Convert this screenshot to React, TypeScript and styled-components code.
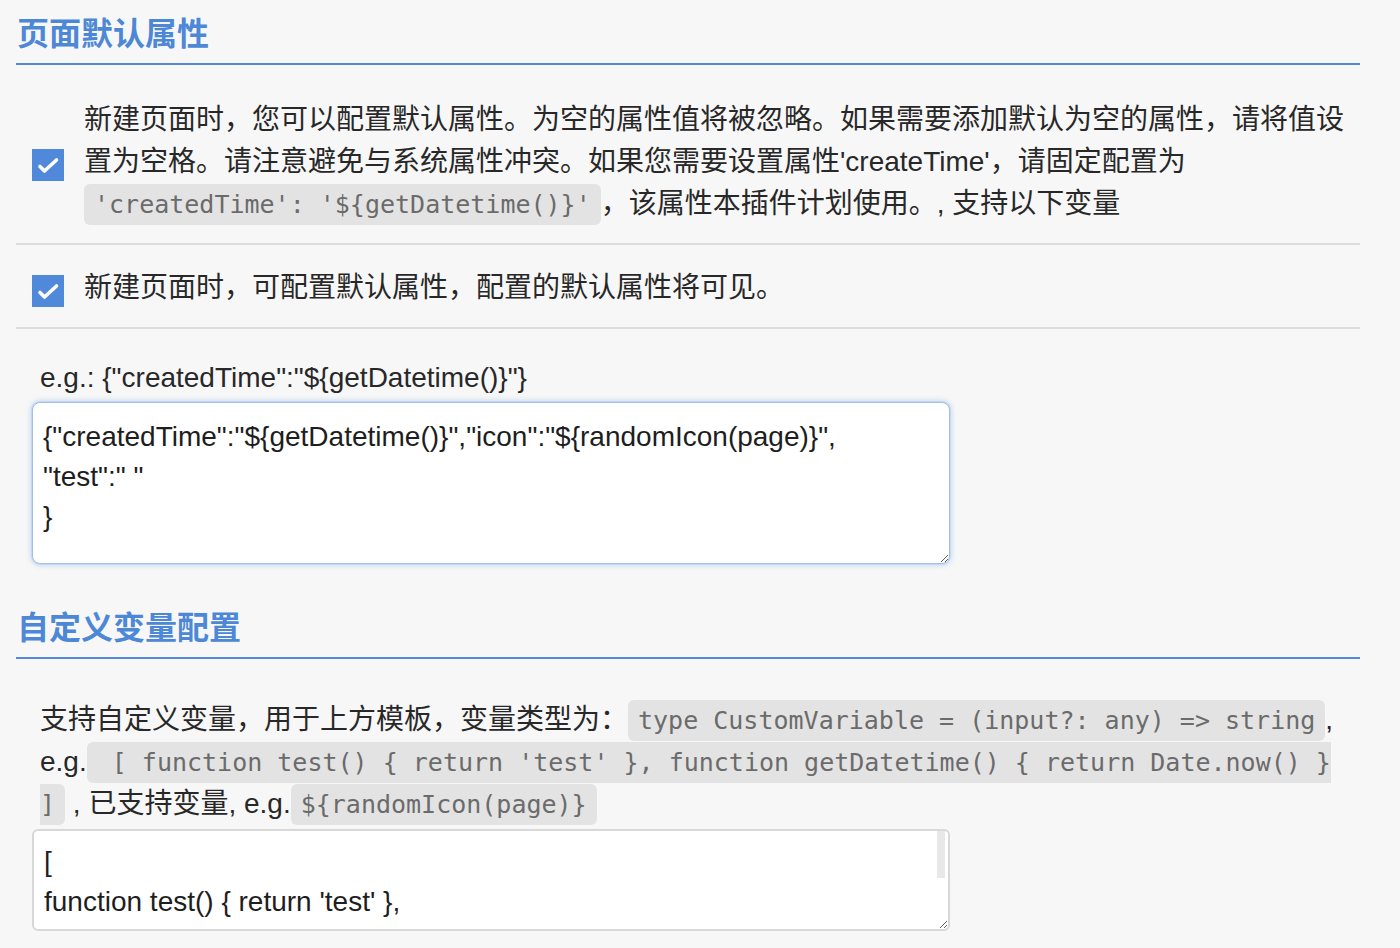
import React from "react";
import styled, { createGlobalStyle } from "styled-components";

const GlobalStyle = createGlobalStyle`
  html, body {
    margin: 0;
    padding: 0;
    background: #f7f7f7;
  }
  body {
    font-family: "Liberation Sans", "Noto Sans CJK SC", sans-serif;
    color: #282828;
  }
  * { box-sizing: border-box; }
`;

const Page = styled.div`
  padding: 7px 0 0 16px;
`;

const Container = styled.div`
  width: 1344px;
`;

const SectionTitle = styled.h2<{ $top?: number }>`
  margin: ${(p) => p.$top ?? 0}px 0 12px 0;
  padding: 0 0 8px 1px;
  font-family: "Noto Sans CJK SC", "Liberation Sans", sans-serif;
  font-size: 32px;
  font-weight: 700;
  line-height: 48px;
  color: #4d88d7;
  border-bottom: 2px solid #508ad9;
`;

const OptionRow = styled.div`
  display: flex;
  align-items: center;
  gap: 20px;
  padding: 22px 0 18px 16px;
  border-bottom: 2px solid #dcdcdc;
`;

const CheckBox = styled.span`
  flex: none;
  width: 32px;
  height: 32px;
  margin-top: 6px;
  background: #5089d9;
  display: flex;
  align-items: center;
  justify-content: center;
`;

const OptionText = styled.p`
  flex: 1;
  margin: 0;
  font-size: 28px;
  line-height: 42px;
`;

const Code = styled.code`
  font-family: "DejaVu Sans Mono", "Liberation Mono", monospace;
  font-size: 25px;
  line-height: 1;
  color: #6b6b6b;
  background: #e3e3e3;
  border-radius: 6px;
  padding: 6px 10px;
`;

const Block = styled.div<{ $top: number }>`
  padding: ${(p) => p.$top}px 0 0 16px;
`;

const Label = styled.div`
  padding-left: 8px;
  font-size: 28px;
  line-height: 42px;
`;

const Desc = styled.p`
  margin: 0;
  padding-left: 8px;
  font-size: 28px;
  line-height: 42px;
`;

const FieldWrap = styled.div<{ $top: number }>`
  position: relative;
  width: 918px;
  margin-top: ${(p) => p.$top}px;
`;

const TextArea = styled.textarea<{ $height: number; $focused?: boolean; $padTop: number }>`
  display: block;
  width: 918px;
  height: ${(p) => p.$height}px;
  padding: ${(p) => p.$padTop}px 10px 0 10px;
  font-family: "Liberation Sans", "Noto Sans CJK SC", sans-serif;
  font-size: 28px;
  line-height: 40px;
  color: #1e1e1e;
  background: #fff;
  resize: vertical;
  outline: none;
  caret-color: #000;
  border-radius: ${(p) => (p.$focused ? 8 : 6)}px;
  border: ${(p) => (p.$focused ? "1px solid #9fbeea" : "2px solid #d8d8d8")};
  box-shadow: ${(p) =>
    p.$focused ? "0 0 0 1px #c6d8f3, 0 0 6px rgba(80, 137, 217, 0.45)" : "none"};
  overflow: hidden;
`;

const ScrollThumb = styled.span`
  position: absolute;
  top: 2px;
  right: 5px;
  width: 8px;
  height: 47px;
  background: #e8e8e8;
`;

const Check = () => (
  <svg width="32" height="32" viewBox="0 0 32 32">
    <polyline
      points="8,17.5 12.5,22 24.5,11"
      fill="none"
      stroke="#fff"
      strokeWidth="3.6"
      strokeLinecap="round"
      strokeLinejoin="round"
    />
  </svg>
);

const template = `{"createdTime":"\${getDatetime()}","icon":"\${randomIcon(page)}",\n"test":" "\n}`;
const variables = `[\nfunction test() { return 'test' },\nfunction getDatetime() { return Date.now() }\n]`;

export default function App() {
  return (
    <>
      <GlobalStyle />
      <Page>
        <Container>
          <SectionTitle>页面默认属性</SectionTitle>
          <OptionRow>
            <CheckBox>
              <Check />
            </CheckBox>
            <OptionText>
              新建页面时，您可以配置默认属性。为空的属性值将被忽略。如果需要添加默认为空的属性，请将值设置为空格。请注意避免与系统属性冲突。如果您需要设置属性'createTime'，请固定配置为
              <wbr />
              <Code>{"'createdTime': '${getDatetime()}'"}</Code>
              ，该属性本插件计划使用。, 支持以下变量
            </OptionText>
          </OptionRow>
          <OptionRow>
            <CheckBox>
              <Check />
            </CheckBox>
            <OptionText>新建页面时，可配置默认属性，配置的默认属性将可见。</OptionText>
          </OptionRow>
          <Block $top={28}>
            <Label>{'e.g.: {"createdTime":"${getDatetime()}"}'}</Label>
            <FieldWrap $top={3}>
              <TextArea $padTop={14} $height={162} $focused defaultValue={template} spellCheck={false} />
            </FieldWrap>
          </Block>
          <SectionTitle $top={37}>自定义变量配置</SectionTitle>
          <Block $top={28}>
            <Desc>
              支持自定义变量，用于上方模板，变量类型为：
              <Code>type CustomVariable = (input?: any) =&gt; string</Code>, e.g.
              <Code>{" [ function test() { return 'test' }, function getDatetime() { return Date.now() } ]"}</Code>
              {" , 已支持变量, e.g."}
              <Code>{"${randomIcon(page)}"}</Code>
            </Desc>
            <FieldWrap $top={4}>
              <TextArea $padTop={11} $height={102} defaultValue={variables} spellCheck={false} />
              <ScrollThumb />
            </FieldWrap>
          </Block>
        </Container>
      </Page>
    </>
  );
}
